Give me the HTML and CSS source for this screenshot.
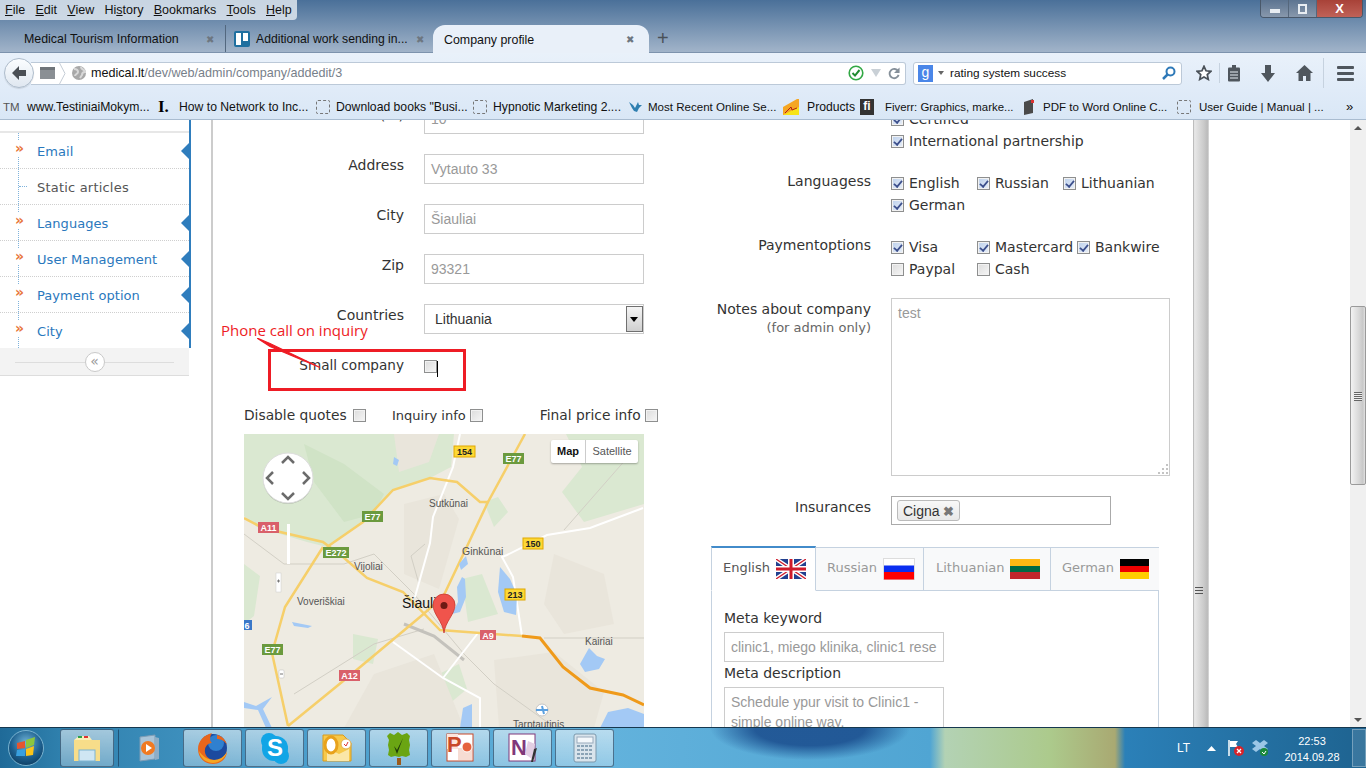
FILE: index.html
```html
<!DOCTYPE html>
<html lang="en">
<head>
<meta charset="utf-8">
<title>Company profile</title>
<link rel="stylesheet" href="styles.css">
</head>
<body>
<div class="screen">
  <header class="chrome">
    <div class="title-row">
      <nav class="menubar">
        <span><u>F</u>ile</span><span><u>E</u>dit</span><span><u>V</u>iew</span><span>Hi<u>s</u>tory</span><span><u>B</u>ookmarks</span><span><u>T</u>ools</span><span><u>H</u>elp</span>
      </nav>
      <div class="winbtns">
        <span class="wb wb-min"><i class="glyph-min"></i></span>
        <span class="wb wb-max"><i class="glyph-max"></i></span>
        <span class="wb wb-close">X</span>
      </div>
    </div>
    <div class="tabs">
      <div class="tab tab-first"><span class="tab-title">Medical Tourism Information</span><span class="tab-x">✖</span></div>
      <div class="tab tab-second">
        <svg class="fav" width="16" height="16" viewBox="0 0 16 16"><rect width="16" height="16" rx="2" fill="#1f6f9f"/><rect x="2" y="2" width="5" height="12" fill="#fff"/><rect x="9" y="2" width="5" height="8" fill="#fff"/></svg>
        <span class="tab-title">Additional work sending in...</span><span class="tab-x">✖</span></div>
      <div class="tab tab-active"><span class="tab-title">Company profile</span><span class="tab-x">✖</span></div>
      <span class="tab-new">+</span>
    </div>
    <div class="navbar">
      <span class="back">
        <svg width="18" height="16" viewBox="0 0 18 16"><path d="M9 1 2 8l7 7v-4h7V5H9z" fill="#4a4f55"/></svg>
      </span>
      <div class="urlbar">
        <span class="cal"></span>
        <svg class="crumb" width="7" height="23" viewBox="0 0 7 23"><path d="M0 0l6 11.500-6 11.500" fill="none" stroke="#c5cdd6"/></svg>
        <svg class="globe" width="14" height="14" viewBox="0 0 14 14"><circle cx="7" cy="7" r="7" fill="#a8a8a8"/><path d="M2 3c3 0 4 1 4 3S3 8 3 10M9 1c0 3 4 2 4 5-2 0-3 1-3 3l-2 3" fill="none" stroke="#d8d8d8" stroke-width="2"/></svg>
        <span class="url"><b>medical.lt</b>/dev/web/admin/company/addedit/3</span>
        <svg class="shield" width="16" height="16" viewBox="0 0 16 16"><circle cx="8" cy="8" r="6.800" fill="#fff" stroke="#32a845" stroke-width="1.600"/><path d="M4.500 8l2.500 2.600L11.500 5" fill="none" stroke="#1f8a30" stroke-width="2"/></svg>
        <svg class="drop" width="10" height="8" viewBox="0 0 10 8"><path d="M0 0h10L5 8z" fill="#c9d0d6"/></svg>
        <svg class="reload" width="12" height="13" viewBox="0 0 13 13"><path d="M11 4A5 5 0 1 0 11.500 8" fill="none" stroke="#858f99" stroke-width="2"/><path d="M12.500 0v6h-6z" fill="#858f99"/></svg>
      </div>
      <div class="searchbar">
        <span class="g">g</span><svg class="g-drop" width="6" height="4" viewBox="0 0 6 4"><path d="M0 0h6L3 4z" fill="#666"/></svg>
        <span class="search-text">rating system success</span>
        <svg class="loupe" width="14" height="14" viewBox="0 0 14 14"><circle cx="8.500" cy="5.500" r="4" fill="none" stroke="#2e79b8" stroke-width="2"/><path d="M5.500 8.500 1 13" stroke="#2e79b8" stroke-width="2.500"/></svg>
      </div>
      <div class="tools">
        <svg class="t-star" width="16" height="16" viewBox="0 0 18 18"><path d="M9 1.500l2.300 5 5.400.6-4 3.700 1.100 5.400L9 13.500l-4.800 2.700 1.100-5.400-4-3.700 5.400-.6z" fill="#fff" stroke="#4a5158" stroke-width="2"/></svg>
        <i class="tool-sep"></i>
        <svg class="t-clip" width="14" height="17" viewBox="0 0 14 17"><rect x="1" y="2.500" width="12" height="14" rx="1" fill="#4f565d"/><rect x="5" y="0" width="4" height="4" fill="#4f565d"/><path d="M3 7h8M3 10h8M3 13h8" stroke="#e8eef5"/></svg>
        <svg class="t-down" width="16" height="17" viewBox="0 0 16 17"><path d="M5 0h6v8h4l-7 9-7-9h4z" fill="#4f565d"/></svg>
        <svg class="t-home" width="17" height="16" viewBox="0 0 17 16"><path d="M8.500 0 17 8h-2.500v8H10v-5H7v5H2.500V8H0z" fill="#4f565d"/></svg>
        <i class="tool-sep tool-sep-2"></i>
        <span class="burger"><i></i><i></i><i></i></span>
      </div>
    </div>
    <div class="bookmarks">
      <span class="bm"><span class="tm">TM</span>www.TestiniaiMokym...</span>
      <span class="bm"><span class="bm-i">I.</span>How to Network to Inc...</span>
      <span class="bm"><i class="dash"></i>Download books "Busi...</span>
      <span class="bm"><i class="dash"></i>Hypnotic Marketing 2....</span>
      <span class="bm bm-narrow"><svg class="ico" width="14" height="14" viewBox="0 0 14 14"><path d="M1 2l4 3 2 3 3-6 1 3 3 0-3 3-2 4-3-1-2-3z" fill="#2f7fb0"/></svg>Most Recent Online Se...</span>
      <span class="bm bm-wide"><svg class="ico" width="16" height="16" viewBox="0 0 16 16"><path d="M0 16V8L14 0h2v16z" fill="#f5a623"/><path d="M0 16l16-8v8z" fill="#f7e318"/><path d="M2 14l6-6 1 3 5-2" fill="none" stroke="#b32012"/></svg>Products</span>
      <span class="bm bm-wide bm-fiverr"><span class="bm-fi">fi</span>Fiverr: Graphics, marke...</span>
      <span class="bm bm-narrow"><svg class="ico" width="16" height="16" viewBox="0 0 16 16"><path d="M3 3l9-3v14l-9 2z" fill="#4a4a4a"/><path d="M10 1h3v3h-3z" fill="#d33"/></svg>PDF to Word Online C...</span>
      <span class="bm bm-narrow bm-last"><i class="dash"></i>User Guide | Manual | ...</span>
      <span class="bm-more">»</span>
    </div>
  </header>

  <main class="page">
    <aside class="sidebar">
      <ul class="menu">
        <li class="item"><span class="chev">»</span><a>Email</a><i class="tri"></i></li>
        <li class="item item-plain"><i class="tick"></i><span class="plain">Static articles</span></li>
        <li class="item"><span class="chev">»</span><a>Languages</a><i class="tri"></i></li>
        <li class="item"><span class="chev">»</span><a>User Management</a><i class="tri"></i></li>
        <li class="item"><span class="chev">»</span><a>Payment option</a><i class="tri"></i></li>
        <li class="item"><span class="chev">»</span><a>City</a><i class="tri"></i></li>
      </ul>
      <div class="collapse"><span class="collapse-btn">«</span></div>
    </aside>

    <section class="panel">
      <div class="col-left">
        <div class="row row-top"><label>(...)</label><span class="field">10</span></div>
        <div class="row"><label>Address</label><span class="field">Vytauto 33</span></div>
        <div class="row"><label>City</label><span class="field">Šiauliai</span></div>
        <div class="row"><label>Zip</label><span class="field">93321</span></div>
        <div class="row"><label>Countries</label><span class="field select"><span>Lithuania</span><i class="sel-btn"></i></span></div>
        <div class="row row-small"><label>Small company</label><span class="cb"></span><i class="caret"></i></div>
        <div class="opts">
          <span class="opt opt-1">Disable quotes <span class="cb"></span></span>
          <span class="opt opt-2">Inquiry info <span class="cb"></span></span>
          <span class="opt opt-3">Final price info <span class="cb"></span></span>
        </div>
        <div class="map">
          <svg class="map-svg" width="400" height="293" viewBox="0 0 400 293">
            <rect width="400" height="293" fill="#eeebe2"/>
            <g fill="#dae8d1">
              <path d="M0 0h150l60 0-3 33-21 11-37 12-30 32-36 25-20-5-50-15L0 82z"/>
              <path d="M322 0h78v70l-60 18-22-30 20-25z"/>
              <path d="M0 130l16 12-6 40-10 8zM109 200l25 5-5 25-20-5zM285 250l30 25-15 18h-30zM218 145l20-5 16 40-30 8z"/>
              <path d="M240 68l14-5 10 15-14 15z"/>
              <path d="M195 240l20-10 8 25-18 15z"/>
            </g>
            <path d="M60 10l40 20 40 30-10 20-30 8-30-40z" fill="#d0e3c6"/>
            <g fill="#e9e5db">
              <path d="M150 0h45l-10 28-30 10z"/>
              <path d="M160 70l40-10 15 25-20 70-35-15z"/>
              <path d="M250 226l60-8 50 40-10 36h-95z"/>
              <path d="M130 240l60-20 30 74h-120z"/>
              <path d="M310 120l50 20 10 50-50 10-20-30z"/>
            </g>
            <g fill="none" stroke="#d2cfc5" stroke-width="1">
              <path d="M0 100l40 30 60 0 30-10 40 40 50 60 30 30 60 43"/>
              <path d="M50 260l80-50 50-15"/>
              <path d="M320 96l70-80"/>
              <path d="M300 204h100"/>
              <path d="M175 150l-8-28 14-12"/>
            </g>
            <path d="M160 190l30 12 30 24" fill="none" stroke="#c4c2bc" stroke-width="3"/>
            <g fill="none" stroke="#fff" stroke-width="2">
              <path d="M216 0l-7 33-20 50-3 26-15 54"/>
              <path d="M399 74l-53 20-43 7-40 20-5 2 11 20 9 59"/>
              <path d="M149 208l50 36 37 20v30M199 244l35-45"/>
            </g>
            <g fill="none" stroke="#f6cf6a" stroke-width="2.500">
              <path d="M281 0l-37 68-45 95-23 20-67 56-65 53"/>
              <path d="M0 84l19 10 60 14 20 15 24 21 36 14 37 38 40 3 42 3"/>
              <path d="M79 113l-38 60-13 46 16 73"/>
              <path d="M83 113l36-25 30-32 37-12 27 4 23 20h8"/>
            </g>
            <path d="M278 202l18 2 23 29 27 21 33 7 21 10" fill="none" stroke="#ef9a1a" stroke-width="3"/>
            <g fill="#a3c9f5">
              <path d="M218 143l-5 10 1 15-6 12 8-2 6-15-1-18z"/>
              <path d="M222 122l2 8-7 6-2-6z"/>
              <path d="M256 133l10 12 7 16-1 20-12-3-6-20z"/>
              <path d="M345 214l8 8 8 3-6 10-14 3-5-8z"/>
              <path d="M356 294l8-16 20-4 16 6v14z"/>
              <path d="M150 23l5 3-2 6-4-2z"/>
              <path d="M48 188l20 4-4 2-14-2z"/>
              <path d="M219 274l9-4v24h-12z"/>
              <path d="M0 268l12 4 16-9-9 12 9 19H22l-8-18-14-2z"/>
            </g>
            <g>
              <rect x="210" y="12" width="21" height="11" fill="#fdd835" stroke="#e0a800"/>
              <text x="220.500" y="21" class="m-num">154</text>
              <rect x="279" y="104" width="20" height="11" fill="#fdd835" stroke="#e0a800"/>
              <text x="289" y="113" class="m-num">150</text>
              <rect x="261" y="155" width="20" height="11" fill="#fdd835" stroke="#e0a800"/>
              <text x="271" y="164" class="m-num">213</text>
            </g>
            <g>
              <rect x="259" y="19" width="21" height="11" fill="#6b9a3e"/><text x="269.500" y="28" class="m-e">E77</text>
              <rect x="118" y="77" width="21" height="11" fill="#6b9a3e"/><text x="128.500" y="86" class="m-e">E77</text>
              <rect x="79" y="113" width="26" height="11" fill="#6b9a3e"/><text x="92" y="122" class="m-e">E272</text>
              <rect x="18" y="210" width="21" height="11" fill="#6b9a3e"/><text x="28.500" y="219" class="m-e">E77</text>
              <rect x="14" y="88" width="21" height="11" fill="#d9606a"/><text x="24.500" y="97" class="m-e">A11</text>
              <rect x="236" y="196" width="16" height="10" fill="#d9606a"/><text x="244" y="204.500" class="m-e">A9</text>
              <rect x="95" y="236" width="21" height="11" fill="#d9606a"/><text x="105.500" y="245" class="m-e">A12</text>
              <rect x="0" y="186" width="8" height="10" fill="#3a78c8"/><text x="3" y="194.500" class="m-e">6</text>
            </g>
            <g class="m-lab">
              <text x="185" y="73">Sutkūnai</text>
              <text x="218" y="121" class="m-lab-big">Ginkūnai</text>
              <text x="110" y="136">Vijoliai</text>
              <text x="53" y="171">Voveriškiai</text>
              <text x="341" y="211">Kairiai</text>
              <text x="269" y="294">Tarptautinis</text>
            </g>
            <text x="158" y="174" class="m-city">Šiauliai</text>
            <circle cx="298" cy="276" r="6" fill="#fff" stroke="#c5c5c5"/>
            <path d="M292 276h12M298 272l2 8" stroke="#5aa0e0" stroke-width="2"/>
            <path d="M200 199c-1-11-11-19-11-28a11 11 0 0 1 22 0c0 9-10 17-11 28z" fill="#f0544c" stroke="#c8362e" stroke-width=".8"/>
            <circle cx="200" cy="171.500" r="3.500" fill="#6e1a14"/>
            <rect x="43" y="90" width="3" height="40" fill="#fff"/>
            <rect x="32" y="139" width="5" height="19" fill="#fff" stroke="#ccc" stroke-width=".5"/>
            <path d="M33 147h3M34.500 145.500v3" stroke="#777"/>
            <rect x="35" y="236" width="5" height="8" rx="1" fill="#fff" stroke="#bbb" stroke-width=".5"/>
            <path d="M36 240h3" stroke="#777"/>
            <circle cx="44" cy="45" r="25" fill="#000" opacity=".18"/>
            <circle cx="44" cy="44" r="25" fill="#fff" stroke="#ddd"/>
            <path d="M38 29l6-6 6 6M38 59l6 6 6-6M29 38l-6 6 6 6M59 38l6 6-6 6" fill="none" stroke="#6b6b6b" stroke-width="2.500"/>
          </svg>
          <div class="map-type"><span class="mt-on">Map</span><span class="mt-off">Satellite</span></div>
        </div>
      </div>

      <div class="col-right">
        <div class="rrow rrow-top">
          <label></label>
          <div class="checks checks-1">
            <span class="chk"><span class="cb on"></span>Certified</span>
            <span class="chk"><span class="cb on"></span>International partnership</span>
          </div>
        </div>
        <div class="rrow rrow-lang">
          <label>Languagess</label>
          <div class="checks checks-g">
            <span class="chk"><span class="cb on"></span>English</span>
            <span class="chk"><span class="cb on"></span>Russian</span>
            <span class="chk"><span class="cb on"></span>Lithuanian</span>
            <span class="chk"><span class="cb on"></span>German</span>
          </div>
        </div>
        <div class="rrow rrow-pay">
          <label>Paymentoptions</label>
          <div class="checks checks-g">
            <span class="chk"><span class="cb on"></span>Visa</span>
            <span class="chk"><span class="cb on"></span>Mastercard</span>
            <span class="chk"><span class="cb on"></span>Bankwire</span>
            <span class="chk"><span class="cb"></span>Paypal</span>
            <span class="chk"><span class="cb"></span>Cash</span>
          </div>
        </div>
        <div class="rrow rrow-notes">
          <label>Notes about company<small>(for admin only)</small></label>
          <div class="notes">test<svg class="grip" width="11" height="11" viewBox="0 0 11 11"><path d="M9 1h2v2H9zM5 5h2v2H5zM9 5h2v2H9zM1 9h2v2H1zM5 9h2v2H5zM9 9h2v2H9z" fill="#c4c4c4"/></svg></div>
        </div>
        <div class="rrow rrow-ins">
          <label>Insurances</label>
          <div class="tagbox"><span class="tag">Cigna <b>✖</b></span></div>
        </div>
        <div class="langtabs">
          <div class="lt-head">
            <span class="lt lt-on">English
              <svg width="30" height="20" viewBox="0 0 30 20"><rect width="30" height="20" fill="#22408f"/><path d="M0 0l30 20M30 0L0 20" stroke="#fff" stroke-width="4"/><path d="M0 0l30 20M30 0L0 20" stroke="#cf1b2b" stroke-width="1.300"/><path d="M15 0v20M0 10h30" stroke="#fff" stroke-width="6"/><path d="M15 0v20M0 10h30" stroke="#cf1b2b" stroke-width="3"/></svg></span>
            <span class="lt lt-ru">Russian
              <svg width="32" height="22" viewBox="0 0 32 22"><rect x=".5" y=".5" width="31" height="21" fill="#fff" stroke="#ddd"/><rect x="1" y="7.500" width="30" height="7" fill="#0a2ef0"/><rect x="1" y="14" width="30" height="7.500" fill="#f00"/></svg></span>
            <span class="lt lt-lt">Lithuanian
              <svg width="30" height="20" viewBox="0 0 30 20"><rect width="30" height="7" fill="#fdb913"/><rect y="7" width="30" height="6" fill="#006a44"/><rect y="13" width="30" height="7" fill="#c1272d"/></svg></span>
            <span class="lt lt-de">German
              <svg width="29" height="20" viewBox="0 0 29 20"><rect width="29" height="7" fill="#000"/><rect y="7" width="29" height="6" fill="#e00"/><rect y="13" width="29" height="7" fill="#ffce00"/></svg></span>
          </div>
          <div class="lt-body">
            <h4>Meta keyword</h4>
            <div class="field field-meta">clinic1, miego klinika, clinic1 rese</div>
            <h4>Meta description</h4>
            <div class="field field-desc">Schedule ypur visit to Clinic1 -<br>simple online way.</div>
          </div>
        </div>
      </div>

      <div class="note-layer">
        <span class="note-text">Phone call on inquiry</span>
        <span class="note-box"></span>
        <svg class="note-line" width="66" height="32" viewBox="0 0 66 32"><path d="M0 0l13 5.500 50 24-50-21z" fill="#ee1c25" stroke="#ee1c25" stroke-width="1.200"/></svg>
      </div>
    </section>

    <div class="splitter"><span class="split-grip"></span></div>
    <div class="blank"></div>
    <div class="scrollbar">
      <span class="sb-up"></span>
      <span class="sb-thumb"><i></i></span>
      <span class="sb-down"></span>
    </div>
  </main>

  <footer class="taskbar">
    <span class="start"><svg width="38" height="38" viewBox="0 0 38 38"><defs><radialGradient id="orb" cx=".5" cy=".35" r=".7"><stop offset="0" stop-color="#6fb4d8"/><stop offset=".6" stop-color="#1d5f8e"/><stop offset="1" stop-color="#0b3a5e"/></radialGradient></defs><circle cx="19" cy="19" r="17.500" fill="url(#orb)" stroke="#8fc6e0" stroke-width=".8"/><path d="M10 14l8-2v7l-8 1z" fill="#e5552f"/><path d="M19 11l9-3-1 8-8 3z" fill="#8cc63f"/><path d="M10 21l8-1v7l-9 0z" fill="#39a0df"/><path d="M19 20l8-3-1 9-7 1z" fill="#fcc419"/></svg></span>
    <span class="task task-first"><svg width="30" height="28" viewBox="0 0 30 28"><path d="M2 6h26v21H2z" fill="#f7dd8a"/><path d="M2 6l5-4h10l3 4z" fill="#fbeeb8"/><rect x="7" y="16" width="16" height="11" fill="#cfe6f3" stroke="#7cb4d2"/><rect x="6" y="2" width="4" height="2" fill="#2fa24c"/><rect x="12" y="2" width="4" height="2" fill="#d33"/></svg></span>
    <span class="task task-bare"><svg width="26" height="28" viewBox="0 0 26 28"><path d="M4 3l15-2v24L4 27z" fill="#a9c4d8" stroke="#7d9cb5"/><path d="M19 3l4 1v21l-4 1z" fill="#8eaec6"/><circle cx="12" cy="14" r="7" fill="#f07a22"/><path d="M10 10l6 4-6 4z" fill="#fff"/></svg></span>
    <span class="task"><svg width="31" height="33" viewBox="0 0 31 33"><circle cx="16" cy="16" r="14" fill="#1c4a9f"/><circle cx="19" cy="11" r="8" fill="#2f80cf"/><path d="M15 1C7 3 1 9 1 17c0 9 7 15 15 15s14-6 14-13c-1 5-6 9-12 9-7 0-11-5-10-11 1-4 4-6 7-6-3-2-2-7 0-10z" fill="#e8661c"/><path d="M2 19c1 7 7 12 14 12 6 0 12-4 14-11-3 5-8 8-13 8-6 0-12-4-15-9z" fill="#f5a623"/><path d="M20 3c5 1 9 5 10 10-2-4-6-6-10-6z" fill="#e8661c"/></svg></span>
    <span class="task"><svg width="30" height="33" viewBox="0 0 30 33"><circle cx="9" cy="9" r="8" fill="#11a5e6"/><circle cx="21" cy="24" r="8" fill="#11a5e6"/><rect x="2" y="4" width="26" height="25" rx="12" fill="#11a5e6"/><text x="15" y="24" class="sk">S</text></svg></span>
    <span class="task"><svg width="32" height="30" viewBox="0 0 32 30"><path d="M2 2h20l8 8v18H2z" fill="#f7c94b" stroke="#d89a1c"/><path d="M6 15l12 6 10-5v12H6z" fill="#fbe7a8"/><ellipse cx="10" cy="12" rx="6" ry="8" fill="#fff" stroke="#e8a21c" stroke-width="3"/><circle cx="25" cy="11" r="5" fill="#fff" stroke="#e0b050"/><path d="M23 11l2 2 2-4" fill="none" stroke="#d33"/></svg></span>
    <span class="task"><svg width="27" height="33" viewBox="0 0 27 33"><path d="M2 4l3-3 4 2 4-3 4 3 5-2 3 3-1 4 1 5-1 5 1 5-4 2-4-1-3 1-4-1-4 1-3-2 1-5-1-5 1-5z" fill="#6aa513"/><rect x="12" y="26" width="4" height="7" fill="#9b5a1c"/><path d="M9 14l3 8 6-16-6 12z" fill="#1f3b0a"/></svg></span>
    <span class="task"><svg width="30" height="30" viewBox="0 0 30 30"><rect x="1" y="1" width="26" height="27" fill="#fff" stroke="#c8492a"/><rect x="1" y="1" width="11" height="15" fill="#fde4dc"/><text x="1" y="19" class="pp">P</text><rect x="12" y="15" width="14" height="12" fill="#f6dcd3"/><circle cx="21" cy="14" r="5" fill="#e5623e" stroke="#fff"/></svg></span>
    <span class="task"><svg width="30" height="30" viewBox="0 0 30 30"><rect x="1" y="1" width="26" height="27" fill="#fff" stroke="#80397b"/><text x="3" y="22" class="nn">N</text><path d="M20 8l7 3-3 15-7-5z" fill="#e3cfe3"/><path d="M26 16l3-1-4 14-2 0z" fill="#333"/></svg></span>
    <span class="task"><svg width="24" height="30" viewBox="0 0 24 30"><rect x="1" y="1" width="22" height="28" rx="2" fill="#d9e4ec" stroke="#7a98ac"/><rect x="4" y="4" width="16" height="6" fill="#f4f8fb" stroke="#9ab"/><path d="M4 13h16M4 17h16M4 21h16M4 25h16" stroke="#8aa3b6" stroke-width="2" stroke-dasharray="3 1"/></svg></span>
    <span class="tray-fill"></span>
    <span class="lang">LT</span>
    <svg class="tray-up" width="9" height="5" viewBox="0 0 9 5"><path d="M0 5h9L4.500 0z" fill="#fff"/></svg>
    <svg class="tray-flag" width="16" height="17" viewBox="0 0 16 17"><path d="M1 0v16" stroke="#fff" stroke-width="1.500"/><path d="M2 1h8l-2 3 2 3H2z" fill="#fff"/><circle cx="11" cy="11" r="5" fill="#d8232a"/><path d="M9 9l4 4M13 9l-4 4" stroke="#fff" stroke-width="1.300"/></svg>
    <svg class="tray-box" width="16" height="16" viewBox="0 0 16 16"><path d="M4 0l4 3 4-3 4 3-4 3 4 3-4 3-4-3-4 3-4-3 4-3-4-3z" fill="#9bc6e6"/><circle cx="12" cy="12" r="4" fill="#1a8a3a"/><path d="M10 12l2 2 2-3" fill="none" stroke="#fff"/></svg>
    <span class="clock"><span>22:53</span><span>2014.09.28</span></span>
    <span class="show-desktop"></span>
  </footer>
</div>
</body>
</html>
```

FILE: styles.css
```css
* { box-sizing: border-box; }
html, body { margin: 0; padding: 0; }
body { width: 1366px; height: 768px; overflow: hidden; background: #fff; font-family: "DejaVu Sans", sans-serif; }
.screen { width: 1366px; height: 768px; display: flex; flex-direction: column; overflow: hidden; }

/* Browser chrome */
.chrome { height: 120px; flex: none; display: flex; flex-direction: column; font-family: "Liberation Sans", sans-serif; font-size: 12.400px; color: #111;
  background: linear-gradient(180deg, #4a7099 0, #a3b5ca 53px); }
.title-row { height: 25px; flex: none; display: flex; justify-content: space-between; align-items: flex-start; }
.menubar { height: 20px; display: flex; gap: 10.300px; padding: 1px 5px 0 5px; width: 297px; background: rgba(222,230,238,.85); border-bottom-right-radius: 4px; font-size: 12.500px; line-height: 18px; }
.winbtns { display: flex; height: 18px; margin-right: 3px; border: 1px solid #49586a; border-top: 0; border-radius: 0 0 4px 4px; overflow: hidden; }
.wb { display: flex; align-items: center; justify-content: center; height: 17px; }
.wb-min, .wb-max { width: 28px; background: linear-gradient(180deg, #5c7491, #8898ac); border-right: 1px solid #55677c; }
.wb-close { width: 45px; color: #fff; font-weight: 700; font-size: 13px; background: linear-gradient(180deg, #a84238, #c06258); }
.glyph-min { width: 10px; height: 4px; background: #e8edf2; margin-top: 5px; }
.glyph-max { width: 9px; height: 10px; border: 2px solid #e8edf2; }

.tabs { height: 28px; flex: none; display: flex; align-items: stretch; border-bottom: 1px solid #7d93ad; }
.tab { display: flex; align-items: center; white-space: nowrap; padding-top: 1px; }
.tab-first { width: 226px; padding-left: 24px; padding-right: 11px; justify-content: space-between; border-right: 1px solid #53687f; }
.tab-second { width: 207px; padding-left: 8px; padding-right: 9px; }
.tab-active { width: 216px; padding-left: 11px; padding-right: 15px; justify-content: space-between; background: #e9f0f9; border-radius: 12px 12px 0 0; height: 28px; }
.fav { margin-right: 6px; flex: none; }
.tab-second .tab-title { flex: 1; font-size: 12.200px; }
.tab-x { font-size: 10px; color: #6d7680; }
.tab-new { margin-left: 8px; font-size: 20px; color: #4a5158; line-height: 26px; }

.navbar { height: 37px; flex: none; display: flex; align-items: center; background: linear-gradient(#e9f1fa, #e0ebf8); padding: 3px 0 0 4px; }
.back { width: 30px; height: 30px; border-radius: 50%; background: linear-gradient(#fbfdff, #dfe7f0); border: 1px solid #aebccb; display: flex; align-items: center; justify-content: center; z-index: 1; flex: none; box-shadow: 0 1px 1px rgba(0,0,0,.1); }
.urlbar { width: 875px; height: 23px; margin-left: -3px; display: flex; align-items: center; background: #fff; border: 1px solid #bcc9d8; border-left: 0; border-radius: 0 3px 3px 0; flex: none; }
.cal { width: 15px; height: 12px; margin-left: 9px; background: #8a8f94; border-top: 3px solid #6f7479; flex: none; }
.crumb { margin-left: 4px; flex: none; }
.globe { margin-left: 6px; flex: none; }
.url { margin-left: 5px; flex: 1; color: #77808a; font-size: 12.600px; }
.url b { color: #111; font-weight: 400; }
.shield { flex: none; }
.drop { margin-left: 7px; flex: none; }
.reload { margin: 0 5px 0 7px; flex: none; }
.searchbar { width: 269px; height: 23px; margin-left: 7px; display: flex; align-items: center; background: #fff; border: 1px solid #bcc9d8; border-radius: 3px; flex: none; }
.g { width: 15px; height: 17px; margin-left: 4px; background: #4a86e8; color: #fff; font-size: 14px; text-align: center; line-height: 14px; flex: none; }
.g-drop { margin-left: 5px; flex: none; }
.search-text { margin-left: 6px; flex: 1; font-size: 11.800px; }
.loupe { margin-right: 5px; flex: none; }
.tools { display: flex; align-items: center; margin-left: 14px; }
.tool-sep { width: 1px; height: 20px; background: #c6d2df; margin-left: 7px; display: block; }
.t-clip { margin-left: 7px; }
.t-down { margin-left: 19px; }
.t-home { margin-left: 20px; }
.tool-sep-2 { height: 30px; margin-left: 10px; }
.burger { display: flex; flex-direction: column; gap: 3px; margin-left: 13px; }
.burger i { display: block; width: 17px; height: 3px; background: #4f565d; border-radius: 1px; }

.bookmarks { height: 30px; flex: none; display: grid; grid-template-columns: 155px 158px 157px 155px 155px 77px 161px 156px 1fr 24px; align-items: center; background: linear-gradient(#e0ebf8, #d9e7f6); padding: 4px 0 0 3px; border-bottom: 1px solid #a9bcd0; font-size: 12.200px; white-space: nowrap; }
.bm { display: flex; align-items: center; gap: 6px; }
.bm-narrow { font-size: 11.550px; }
.bm-fiverr { font-size: 11.400px; }
.bm-last { gap: 8px; }
.tm { color: #555; font-size: 11.500px; width: 18px; }
.bm-i { width: 15px; height: 14px; font-weight: 700; font-family: "Liberation Serif", serif; font-size: 17px; line-height: 14px; color: #000; flex: none; }
.bm-fi { width: 14px; height: 16px; background: #333; color: #fff; font-weight: 700; font-size: 12px; line-height: 15px; text-align: center; flex: none; margin-right: 3px; }
.dash { display: block; width: 14px; height: 14px; border: 1px dashed #777; border-radius: 2px; flex: none; }
.ico { flex: none; }
.bm-wide { gap: 8px; }
.bm-more { font-size: 13px; padding-left: 4px; }

/* Page */
.page { flex: 1; min-height: 0; display: flex; position: relative; overflow: hidden; background: #fff; }
.sidebar { width: 211px; flex: none; font-size: 13px; }
.menu { list-style: none; margin: 0; padding: 13px 0 0; width: 191px; height: 228px; border-right: 2px solid #2f7dbd; position: relative; overflow: hidden; }
.menu::before { content: ""; position: absolute; left: 0; right: 0; top: 11px; height: 2px; background: #e7e7e7; }
.item { height: 36px; display: flex; align-items: center; position: relative; padding: 1px 0 0 37px; border-bottom: 1px dotted #cfcfcf; letter-spacing: .05px; }
.item::before { content: ""; position: absolute; left: 18px; top: 0; bottom: 0; border-left: 1px dotted #7fb3dc; }
.item a { color: #2a78bd; }
.plain { color: #555; letter-spacing: .2px; }
.chev { position: absolute; left: 15px; top: 8px; width: 9px; background: #fff; color: #e8763a; font-size: 14px; font-weight: 700; line-height: 15px; }
.tick { position: absolute; left: 19px; top: 17px; width: 8px; border-top: 1px dotted #7fb3dc; }
.tri { position: absolute; right: 0; top: 10px; border-style: solid; border-width: 8px 8px 8px 0; border-color: transparent #2f7dbd transparent transparent; }
.collapse { width: 189px; height: 28px; background: #f3f3f3; border-bottom: 1px solid #ddd; display: flex; align-items: center; justify-content: center; position: relative; }
.collapse::before { content: ""; position: absolute; left: 15px; right: 15px; top: 14px; height: 1px; background: #ddd; }
.collapse-btn { width: 20px; height: 20px; border: 1px solid #c9c9c9; border-radius: 50%; background: #fff; color: #999; font-size: 14px; line-height: 16px; text-align: center; position: relative; }

.panel { width: 982px; flex: none; border-left: 2px solid #ccc; display: flex; position: relative; overflow: hidden; color: #333; font-size: 14px; }
.col-left { width: 447px; flex: none; padding-left: 31px; margin-top: -16px; }
.row { height: 50px; display: flex; align-items: flex-start; }
.row label { width: 160px; text-align: right; padding-top: 3px; margin-right: 20px; flex: none; white-space: nowrap; }
.row-small { height: 53px; }
.row-small label { font-size: 13.600px; }
.row-small .cb { margin-top: 6px; }
.caret { width: 1px; height: 16px; background: #000; margin-top: 7px; flex: none; display: block; }
.field { display: block; width: 220px; height: 30px; border: 1px solid #ccc; padding: 0 6px; font: 14px/28px "Liberation Sans", sans-serif; color: #999; background: #fff; white-space: nowrap; overflow: hidden; }
.select { display: flex; justify-content: space-between; color: #333; padding: 0 0 0 10px; }
.sel-btn { display: block; width: 17px; height: 26px; margin: 1px 0; border: 1px solid #707070; background: linear-gradient(#f5f5f5, #cfcfcf); position: relative; }
.sel-btn::after { content: ""; position: absolute; left: 3px; top: 10px; border-style: solid; border-width: 5px 4px 0; border-color: #000 transparent transparent; }
.cb { display: inline-block; width: 13px; height: 13px; border: 1px solid #8e8f8f; background: linear-gradient(135deg, #dcdcdc, #f6f6f6); box-shadow: inset 0 0 0 1px #f2f2f2; vertical-align: -2px; position: relative; flex: none; }
.cb.on::after { content: ""; position: absolute; left: 3px; top: 0; width: 4px; height: 8px; border: solid #3c4f8c; border-width: 0 2px 2px 0; transform: rotate(40deg) scale(.85); }
.cb.on { background: linear-gradient(135deg, #bcd0ec, #e9eff8); }
.opts { display: flex; height: 27px; white-space: nowrap; align-items: flex-start; }
.opt-1 { font-size: 13.800px; }
.opt-1 .cb { margin-left: 2px; }
.opt-2 { margin-left: 26px; font-size: 13px; line-height: 17px; }
.opt-3 { margin-left: 57px; font-size: 13.800px; }
.map { width: 400px; height: 293px; position: relative; overflow: hidden; }
.map-svg { display: block; }
.map-svg text { font-family: "Liberation Sans", sans-serif; }
.m-num { font-size: 9px; font-weight: 700; text-anchor: middle; fill: #222; }
.m-e { font-size: 9px; font-weight: 700; text-anchor: middle; fill: #fff; }
.m-lab text { font-size: 10px; fill: #555; }
.m-lab .m-lab-big { font-size: 10.500px; }
.m-city { font-size: 14px; fill: #111; }
.sk { font-size: 24px; font-weight: 700; fill: #fff; text-anchor: middle; font-family: "Liberation Sans", sans-serif; }
.pp { font-size: 22px; font-weight: 700; fill: #c8492a; font-family: "Liberation Sans", sans-serif; }
.nn { font-size: 22px; font-weight: 700; fill: #80397b; font-family: "Liberation Sans", sans-serif; }
.map-type { position: absolute; right: 6px; top: 6px; height: 23px; display: flex; background: #fff; font: 11px/22px "Liberation Sans", sans-serif; box-shadow: 0 1px 2px rgba(0,0,0,.3); border-radius: 2px; }
.mt-on { width: 35px; text-align: center; color: #111; font-weight: 700; border-right: 1px solid #ccc; }
.mt-off { width: 52px; text-align: center; color: #565656; }

.col-right { width: 533px; flex: none; margin-top: -12px; }
.rrow { display: flex; align-items: flex-start; }
.rrow > label { width: 211px; text-align: right; padding-top: 0; line-height: 18px; margin-right: 20px; flex: none; white-space: nowrap; }
.rrow small { display: block; font-size: 13px; color: #666; line-height: 19px; }
.rrow-top { height: 64px; }
.rrow-lang { height: 64px; }
.rrow-pay { height: 62px; }
.rrow-notes { height: 198px; }
.rrow-notes > label, .rrow-ins > label { padding-top: 2px; }
.rrow-ins { height: 51px; }
.checks { display: flex; flex-wrap: wrap; flex: none; }
.checks-1 { flex-direction: column; }
.checks-g { width: 279px; }
.chk { height: 22px; line-height: 22px; white-space: nowrap; width: 86px; }
.checks-1 .chk { width: auto; }
.chk .cb { margin-right: 5px; }
.rrow-lang .chk:nth-child(3) { width: 107px; }
.rrow-pay .chk:nth-child(2) { width: 100px; }
.rrow-pay .chk:nth-child(3) { width: 93px; }
.notes { width: 279px; height: 178px; border: 1px solid #ccc; padding: 6px 6px; font: 14px/16px "Liberation Sans", sans-serif; color: #999; position: relative; flex: none; }
.grip { position: absolute; right: 1px; bottom: 1px; }
.tagbox { width: 220px; height: 29px; border: 1px solid #aaa; padding: 3px 5px; flex: none; }
.tag { display: inline-block; height: 21px; padding: 0 5px; border: 1px solid #bbb; border-radius: 3px; background: linear-gradient(#f8f8f8, #e8e8e8); font: 14px/20px "Liberation Sans", sans-serif; color: #333; }
.tag b { color: #777; font-size: 13px; }
.langtabs { width: 448px; margin-left: 51px; border: 1px solid #c5d2e0; border-top: 0; height: 300px; }
.lt-head { display: flex; height: 44px; background: #f8f9fa; border-bottom: 1px solid #c5d2e0; border-top: 1px solid #c5d2e0; margin: 0 -1px; font-size: 13px; color: #999; }
.lt { display: flex; align-items: center; gap: 6px; border-right: 1px solid #c5d2e0; padding-left: 11px; padding-bottom: 4px; }
.lt svg { margin-top: 4px; }
.lt-on { width: 105px; background: #fff; color: #555; border-top: 2px solid #428bca; border-left: 1px solid #c5d2e0; margin-top: -2px; height: 45px; border-bottom: 1px solid #fff; }
.lt-ru { width: 108px; }
.lt-lt { width: 127px; padding-left: 12px; }
.lt-de { width: 108px; border-right: 0; }
.lt-body { padding: 18px 12px; }
.lt-body h4 { margin: 0 0 5px; font-weight: 400; font-size: 14px; line-height: 18px; color: #333; }
.field-meta { margin-bottom: 2px; }
.field-desc { height: 60px; line-height: 20px; padding-top: 4px; white-space: normal; }

.note-layer { position: absolute; inset: 0; pointer-events: none; }
.note-text { position: absolute; left: 8px; top: 201px; color: #ee1c25; font: 15px/18px "Open Sans", sans-serif; }
.note-box { position: absolute; left: 55px; top: 229px; width: 198px; height: 42px; border: 3px solid #ee1c25; }
.note-line { position: absolute; left: 44px; top: 218px; }

.splitter { width: 16px; flex: none; background: linear-gradient(90deg, #aaa 0, #e8e8e8 10%, #c9c9c9 70%, #bbb 90%, #ddd 100%); position: relative; }
.split-grip { position: absolute; left: 2px; top: 467px; width: 8px; height: 7px; border-top: 1px solid #555; border-bottom: 1px solid #555; }
.split-grip::after { content: ""; position: absolute; left: 0; right: 0; top: 2px; height: 1px; background: #555; }
.blank { flex: 1; background: #fff; }
.scrollbar { width: 16px; flex: none; background: #f0f0f0; position: relative; }
.sb-up { position: absolute; top: 6px; left: 4px; border-style: solid; border-width: 0 4px 4px; border-color: transparent transparent #555; }
.sb-down { position: absolute; bottom: 5px; left: 4px; border-style: solid; border-width: 4px 4px 0; border-color: #555 transparent transparent; }
.sb-thumb { position: absolute; left: 0; right: 0; top: 186px; height: 179px; background: linear-gradient(90deg, #f2f2f2, #d6d6d6 60%, #c8c8c8 85%, #e2e2e2); border: 1px solid #9a9a9a; border-radius: 2px; }
.sb-thumb i { position: absolute; left: 3px; right: 3px; top: 85px; height: 9px; background: repeating-linear-gradient(#666 0 1px, #eee 1px 2px); }

/* Taskbar */
.taskbar { height: 41px; flex: none; display: flex; align-items: center; border-top: 1px solid #16384f; color: #fff; font: 11px "Liberation Sans", sans-serif;
  background:
    radial-gradient(ellipse 100px 32px at 810px 0, rgba(25,75,140,.85) 55%, rgba(25,75,140,0) 100%),
    linear-gradient(90deg, #1f6a98 0, #2f80ad 60px, #4a9dcb 300px, #62b2dc 610px, #50a5d3 930px, #b3d2b4 945px, #acca8c 1050px, #a9a972 1115px, #2b80b8 1125px, #1e6390 1366px); }
.start { width: 60px; flex: none; display: flex; justify-content: center; padding-right: 8px; }
.task { width: 59px; height: 38px; margin-right: 3px; display: flex; align-items: center; justify-content: center; flex: none; border: 1px solid rgba(20,50,80,.6); border-radius: 3px; background: linear-gradient(rgba(255,255,255,.55), rgba(255,255,255,.3)); }
.task-first { width: 54px; margin-right: 4px; }
.task-bare { width: 61px; margin-right: 4px; background: none; border-color: transparent; border-left-color: rgba(20,50,80,.6); border-radius: 0; }
.tray-fill { flex: 1; }
.lang { margin-right: 17px; font-size: 12px; }
.tray-up { margin-right: 12px; }
.tray-flag { margin-right: 8px; }
.tray-box { margin-right: 13px; }
.clock { display: flex; flex-direction: column; align-items: center; width: 62px; gap: 3px; line-height: 13px; margin-right: 9px; padding-top: 2px; }
.show-desktop { width: 14px; height: 38px; border: 1px solid rgba(255,255,255,.3); background: rgba(255,255,255,.12); }
```
